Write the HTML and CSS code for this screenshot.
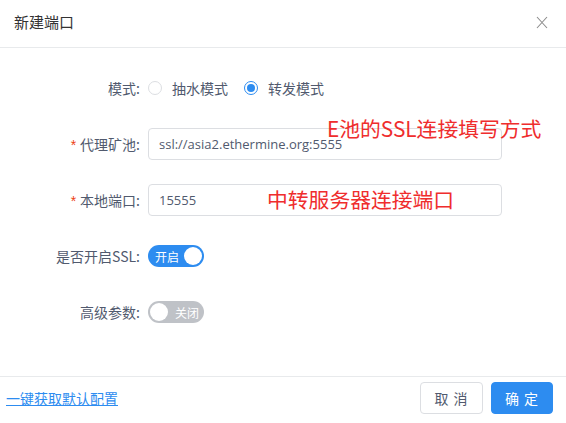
FILE: index.html
```html
<!DOCTYPE html>
<html lang="zh">
<head>
<meta charset="utf-8">
<link rel="stylesheet" href="styles.css">
</head>
<body>
<div class="modal">
  <div class="modal-header">
    <span class="title">新建端口</span>
    <svg class="close" width="12" height="13" viewBox="0 0 12 13"><path d="M1 1 L11 12 M11 1 L1 12" stroke="#8c8c8c" stroke-width="1.1" fill="none"/></svg>
  </div>
  <div class="modal-body">
    <div class="form-item">
      <label class="label">模式:</label>
      <div class="control radios">
        <span class="radio"><span class="circle"></span>抽水模式</span>
        <span class="radio checked"><span class="circle"></span>转发模式</span>
      </div>
    </div>
    <div class="form-item">
      <label class="label"><span class="req">*</span>代理矿池:</label>
      <div class="control">
        <div class="input">ssl://asia2.ethermine.org:5555</div>
      </div>
      <span class="note note1">E池的SSL连接填写方式</span>
    </div>
    <div class="form-item">
      <label class="label"><span class="req">*</span>本地端口:</label>
      <div class="control">
        <div class="input">15555</div>
      </div>
      <span class="note note2">中转服务器连接端口</span>
    </div>
    <div class="form-item">
      <label class="label">是否开启SSL:</label>
      <div class="control">
        <span class="switch on"><span class="sw-text">开启</span><span class="knob"></span></span>
      </div>
    </div>
    <div class="form-item">
      <label class="label">高级参数:</label>
      <div class="control">
        <span class="switch off"><span class="knob"></span><span class="sw-text">关闭</span></span>
      </div>
    </div>
  </div>
  <div class="modal-footer">
    <a class="link" href="#">一键获取默认配置</a>
    <div class="buttons">
      <button class="btn">取 消</button>
      <button class="btn primary">确 定</button>
    </div>
  </div>
</div>
</body>
</html>
```

FILE: styles.css
```css
* { box-sizing: border-box; }
html, body { margin: 0; padding: 0; background: #fff; }
body {
  font-family: "Noto Sans CJK SC", "Noto Sans", sans-serif;
  color: #515a6e;
  font-size: 14px;
  width: 566px;
  height: 423px;
  overflow: hidden;
}
.modal { width: 566px; height: 423px; display: flex; flex-direction: column; }
.modal-header {
  height: 48px;
  border-bottom: 1px solid #e8eaec;
  display: flex;
  align-items: center;
  justify-content: space-between;
  padding: 0 18px 4px 14px;
}
.title { font-size: 15px; color: #333; }
.close { margin-top: 2px; }
.modal-body { padding: 24px 16px 0 16px; height: 328px; }
.form-item {
  display: flex;
  align-items: center;
  height: 32px;
  margin-bottom: 24px;
  position: relative;
}
.label {
  width: 132px;
  padding-right: 8px;
  text-align: right;
  color: #515a6e;
  white-space: nowrap;
  font-size: 14px;
}
.req { color: #ed4014; margin-right: 4px; font-family: "Liberation Sans", sans-serif; }
.control { display: flex; align-items: center; }
.radio { display: inline-flex; align-items: center; margin-right: 16px; color: #515a6e; font-size: 14px; }
.radio .circle {
  width: 14px; height: 14px; border-radius: 50%;
  border: 1px solid #dcdee2;
  margin-right: 10px;
  display: inline-block;
  position: relative;
}
.radio.checked .circle { border-color: #2d8cf0; }
.radio.checked .circle::after {
  content: ""; position: absolute; left: 2px; top: 2px;
  width: 8px; height: 8px; border-radius: 50%; background: #2d8cf0;
}
.input {
  width: 354px; height: 32px;
  border: 1px solid #dcdee2; border-radius: 4px;
  padding: 0 10px;
  display: flex; align-items: center;
  color: #515a6e; font-size: 13px;
  font-family: "Open Sans", "Noto Sans", sans-serif;
}
.note {
  position: absolute;
  color: #ef2d2d;
  font-size: 20.8px;
  white-space: nowrap;
  line-height: 1;
}
.note1 { left: 311px; top: -10px; }
.note2 { left: 251px; top: 5px; }
.switch {
  width: 56px; height: 22px; border-radius: 11px;
  display: inline-flex; align-items: center;
  padding: 0 2px;
  color: #fff; font-size: 12px;
}
.switch.on { background: #2d8cf0; justify-content: space-between; padding-left: 7px; }
.switch.off { background: #bfc2c7; padding-left: 2px; }
.knob { width: 18px; height: 18px; border-radius: 50%; background: #fff; display: inline-block; }
.switch.off .sw-text { margin-left: 7px; }
.modal-footer {
  flex: 1;
  border-top: 1px solid #e8eaec;
  display: flex;
  align-items: center;
  justify-content: space-between;
  padding: 0 13px 4px 6px;
}
.link { color: #2d8cf0; text-decoration: underline; font-size: 14px; }
.buttons { display: flex; gap: 8px; }
.btn {
  height: 32px; width: 63px;
  border: 1px solid #dcdee2; border-radius: 4px;
  background: #fff; color: #515a6e;
  font-family: "Noto Sans CJK SC", sans-serif;
  font-size: 14px;
  padding: 0;
  letter-spacing: 1px;
}
.btn.primary { background: #2d8cf0; border-color: #2d8cf0; color: #fff; width: 62px; }
```
